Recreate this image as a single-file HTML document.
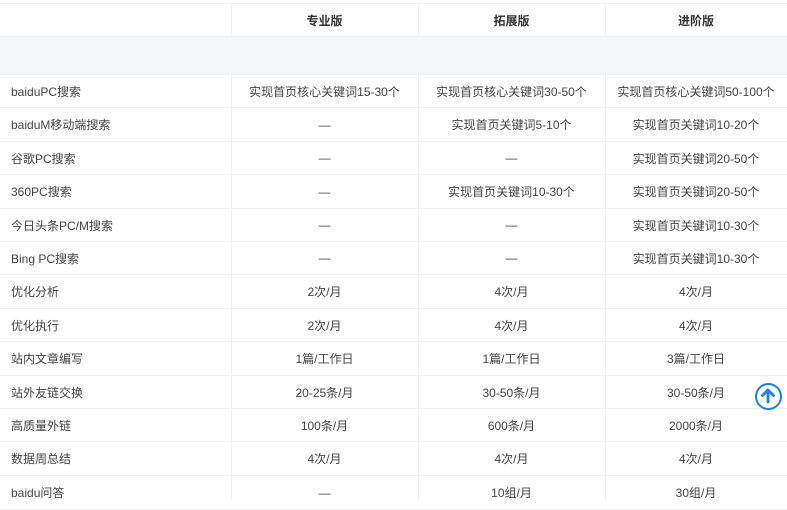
<!DOCTYPE html>
<html><head><meta charset="utf-8"><style>
*{margin:0;padding:0;box-sizing:border-box}
body{width:787px;height:500px;overflow:hidden;background:#fff;font-family:"Liberation Sans","Noto Sans CJK SC",sans-serif;font-size:12px;color:#444;position:relative}
.r{position:absolute;left:0;width:787px;border-bottom:1px solid #eef0f3;display:flex;align-items:center}
.c{position:absolute;top:0;bottom:0;display:flex;align-items:center;justify-content:center}
.c0{left:0;width:231px;justify-content:flex-start;padding-left:11px}
.c1{left:231px;width:187px}.c2{left:418px;width:187px}.c3{left:605px;width:182px}
.v{position:absolute;top:3px;bottom:0;width:1px;background:#eef0f3}
.h .c{font-weight:bold;color:#333}
.up{position:absolute;left:755px;top:383px;width:27px;height:27px;border:2.5px solid #1a7fe8;border-radius:50%;background:#fff;z-index:3}
</style></head><body>
<div class="v" style="left:231px"></div><div class="v" style="left:418px"></div><div class="v" style="left:605px"></div>
<div class="r h" style="top:3px;height:34px;border-top:1px solid #eef0f3"><div class="c c1">专业版</div><div class="c c2">拓展版</div><div class="c c3">进阶版</div></div>
<div class="r" style="top:37px;height:38px;background:#f5f6f8;z-index:2"></div>
<div class="r" style="top:75px;height:33px"><div class="c c0">baiduPC搜索</div><div class="c c1">实现首页核心关键词15-30个</div><div class="c c2">实现首页核心关键词30-50个</div><div class="c c3">实现首页核心关键词50-100个</div></div>
<div class="r" style="top:108px;height:34px"><div class="c c0">baiduM移动端搜索</div><div class="c c1">—</div><div class="c c2">实现首页关键词5-10个</div><div class="c c3">实现首页关键词10-20个</div></div>
<div class="r" style="top:142px;height:33px"><div class="c c0">谷歌PC搜索</div><div class="c c1">—</div><div class="c c2">—</div><div class="c c3">实现首页关键词20-50个</div></div>
<div class="r" style="top:175px;height:34px"><div class="c c0">360PC搜索</div><div class="c c1">—</div><div class="c c2">实现首页关键词10-30个</div><div class="c c3">实现首页关键词20-50个</div></div>
<div class="r" style="top:209px;height:33px"><div class="c c0">今日头条PC/M搜索</div><div class="c c1">—</div><div class="c c2">—</div><div class="c c3">实现首页关键词10-30个</div></div>
<div class="r" style="top:242px;height:33px"><div class="c c0">Bing PC搜索</div><div class="c c1">—</div><div class="c c2">—</div><div class="c c3">实现首页关键词10-30个</div></div>
<div class="r" style="top:275px;height:34px"><div class="c c0">优化分析</div><div class="c c1">2次/月</div><div class="c c2">4次/月</div><div class="c c3">4次/月</div></div>
<div class="r" style="top:309px;height:33px"><div class="c c0">优化执行</div><div class="c c1">2次/月</div><div class="c c2">4次/月</div><div class="c c3">4次/月</div></div>
<div class="r" style="top:342px;height:34px"><div class="c c0">站内文章编写</div><div class="c c1">1篇/工作日</div><div class="c c2">1篇/工作日</div><div class="c c3">3篇/工作日</div></div>
<div class="r" style="top:376px;height:33px"><div class="c c0">站外友链交换</div><div class="c c1">20-25条/月</div><div class="c c2">30-50条/月</div><div class="c c3">30-50条/月</div></div>
<div class="r" style="top:409px;height:33px"><div class="c c0">高质量外链</div><div class="c c1">100条/月</div><div class="c c2">600条/月</div><div class="c c3">2000条/月</div></div>
<div class="r" style="top:442px;height:34px"><div class="c c0">数据周总结</div><div class="c c1">4次/月</div><div class="c c2">4次/月</div><div class="c c3">4次/月</div></div>
<div class="r" style="top:476px;height:34px"><div class="c c0">baidu问答</div><div class="c c1">—</div><div class="c c2">10组/月</div><div class="c c3">30组/月</div></div>
<div class="up"><svg width="22" height="22" viewBox="0 0 22 22" style="position:absolute;left:0;top:0"><path d="M11 17V5M5.5 10.5L11 5l5.5 5.5" stroke="#1a7fe8" stroke-width="2.8" fill="none" stroke-linecap="round" stroke-linejoin="round"/></svg></div>
</body></html>
